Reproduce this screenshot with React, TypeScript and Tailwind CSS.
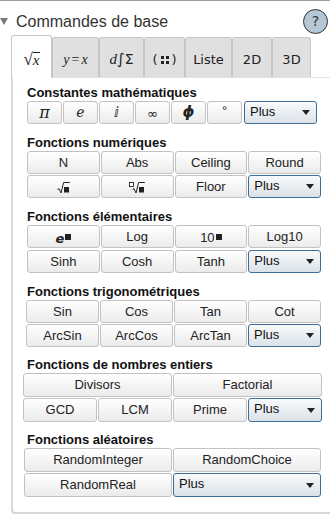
import type { ReactNode } from "react";

const btn =
  "flex h-full items-center justify-center rounded-[3px] border border-[#c2c2c2] bg-linear-to-b from-white to-[#ebebeb] text-[13px] text-[#222]";

function Plus({ className = "" }: { className?: string }) {
  return (
    <div
      className={`flex h-full items-center justify-between rounded-[3px] border border-[#3f6d9a] bg-linear-to-b from-[#f8fafb] to-[#dbe2e8] pl-[5px] pr-[6px] text-[13px] text-[#111] ${className}`}
    >
      <span className="-mt-[2px]">Plus</span>
      <svg width="8" height="5" viewBox="0 0 8 5">
        <path d="M0 0h8L4 5z" fill="#222" />
      </svg>
    </div>
  );
}

function Sq({ size = 6 }: { size?: number }) {
  return <span className="inline-block bg-[#222]" style={{ width: size, height: size }} />;
}

// radical with a placeholder square, optional index box
function Root({ nth }: { nth?: boolean }) {
  return (
    <svg width={nth ? 16 : 13} height="13" viewBox={nth ? "0 0 16 13" : "0 0 13 13"}>
      <g transform={nth ? "translate(3 0)" : undefined}>
        <path d="M0.5 8.5 L2 7.6 L4 12 L6.6 1.5 H12.8" fill="none" stroke="#222" strokeWidth="1" />
        <rect x="7" y="6" width="5" height="5.5" fill="#222" />
      </g>
      {nth && <rect x="0.5" y="1.5" width="4" height="4" fill="white" stroke="#222" strokeWidth="0.9" />}
    </svg>
  );
}

function Tab({ w, active, children }: { w: string; active?: boolean; children: ReactNode }) {
  return (
    <div
      className={`${w} flex items-center justify-center rounded-t-[3px] border border-b-0 border-[#c6c6c6] pt-[4px] text-[13px] text-[#222] ${
        active ? "relative z-10 -mb-px h-[43px] bg-white" : "h-[40px] bg-[#e0e0e0]"
      }`}
    >
      {children}
    </div>
  );
}

function Heading({ children }: { children: ReactNode }) {
  return <div className="text-[13px] font-bold leading-[16px] text-[#111]">{children}</div>;
}

export default function App() {
  return (
    <div className="h-[524px] w-[330px] overflow-hidden border-t border-[#9e9e9e] bg-white font-['Liberation_Sans',Arial,sans-serif] text-[#222]">
      {/* header */}
      <div className="flex h-[34px] items-start">
        <svg className="mt-[17px]" width="8" height="7" viewBox="0 0 8 7">
          <path d="M0 0h8L4 7z" fill="#7a7a7a" />
        </svg>
        <span className="ml-[8px] mt-[12px] text-[16px] leading-[18px] text-[#333]">Commandes de base</span>
        <div className="ml-auto mr-[2px] mt-[8px] flex h-[25px] w-[25px] items-center justify-center rounded-full border border-[#333] bg-[#b5c7d5] font-['DejaVu_Sans',sans-serif] text-[14px] text-[#333]">
          ?
        </div>
      </div>

      {/* tabs */}
      <div className="flex h-[42px] items-end pl-[11px] font-['DejaVu_Sans',sans-serif]">
        <Tab w="w-[41px]" active>
          <span className="font-['Liberation_Serif',serif] text-[17px] leading-[17px]">√</span>
          <span className="mt-[1px] border-t border-[#222] font-['Liberation_Serif',serif] text-[15px] italic leading-[14px]">
            x
          </span>
        </Tab>
        <Tab w="w-[47px]">
          <span className="font-['Liberation_Serif',serif] text-[14px] italic">
            y<span className="mx-[2px] not-italic">=</span>x
          </span>
        </Tab>
        <Tab w="w-[45px]">
          <span className="font-['Liberation_Serif',serif] text-[15px] italic">d</span>
          <span className="text-[15px]">∫</span>
          <span className="text-[14px]">Σ</span>
        </Tab>
        <Tab w="w-[41px]">
          <span className="flex items-center gap-[3px]">
            <span className="text-[13px]">(</span>
            <span className="grid grid-cols-2 gap-[2px]">
              <Sq size={3} />
              <Sq size={3} />
              <Sq size={3} />
              <Sq size={3} />
            </span>
            <span className="text-[13px]">)</span>
          </span>
        </Tab>
        <Tab w="w-[47px]">Liste</Tab>
        <Tab w="w-[40px]">2D</Tab>
        <Tab w="w-[39px]">3D</Tab>
      </div>

      {/* panel */}
      <div className="ml-[11px] rounded-bl-[4px] border-t border-l-2 border-b-2 border-[#d8d8d8] border-t-[#e2e2e2] pb-[15px] pl-[14px] pt-[7px]">
        <div className="mb-[11px]">
          <Heading>Constantes mathématiques</Heading>
          <div className="flex h-[23px] gap-[1px]">
            <div className={`${btn} w-[35px] font-['DejaVu_Serif',serif] text-[16px] italic`}>π</div>
            <div className={`${btn} w-[35px] font-['DejaVu_Sans',sans-serif] text-[14px] italic`}>ℯ</div>
            <div className={`${btn} w-[35px] font-['DejaVu_Sans',sans-serif] text-[14px]`}>ⅈ</div>
            <div className={`${btn} w-[35px] pt-[3px] font-['DejaVu_Sans',sans-serif] text-[12px]`}>∞</div>
            <div className={`${btn} w-[35px] font-['DejaVu_Sans',sans-serif] text-[15px] font-bold italic`}>ϕ</div>
            <div className={`${btn} w-[35px] pb-[4px] text-[11px]`}>°</div>
            <Plus className="ml-[1px] w-[73px]" />
          </div>
        </div>

        <div className="mb-[11px]">
          <Heading>Fonctions numériques</Heading>
          <div className="grid w-[294px] grid-cols-4 grid-rows-[23px_23px] gap-[1px]">
            <div className={btn}>N</div>
            <div className={btn}>Abs</div>
            <div className={btn}>Ceiling</div>
            <div className={btn}>Round</div>
            <div className={`${btn} pt-[2px]`}>
              <Root />
            </div>
            <div className={`${btn} pt-[2px]`}>
              <Root nth />
            </div>
            <div className={btn}>Floor</div>
            <Plus />
          </div>
        </div>

        <div className="mb-[11px]">
          <Heading>Fonctions élémentaires</Heading>
          <div className="grid w-[294px] grid-cols-4 grid-rows-[23px_23px] gap-[2px_1px]">
            <div className={btn}>
              <span className="flex items-start leading-none">
                <span className="mt-[3px] font-['DejaVu_Sans',sans-serif] text-[13px] font-bold italic">e</span>
                <span className="ml-[1px]">
                  <Sq size={6} />
                </span>
              </span>
            </div>
            <div className={btn}>Log</div>
            <div className={btn}>
              <span className="flex items-start leading-none">
                <span className="mt-[2px]">10</span>
                <span className="ml-[1px]">
                  <Sq size={6} />
                </span>
              </span>
            </div>
            <div className={btn}>Log10</div>
            <div className={btn}>Sinh</div>
            <div className={btn}>Cosh</div>
            <div className={btn}>Tanh</div>
            <Plus />
          </div>
        </div>

        <div className="mb-[10px]">
          <Heading>Fonctions trigonométriques</Heading>
          <div className="-ml-[1px] grid w-[295px] grid-cols-4 grid-rows-[23px_23px] gap-[1px]">
            <div className={btn}>Sin</div>
            <div className={btn}>Cos</div>
            <div className={btn}>Tan</div>
            <div className={btn}>Cot</div>
            <div className={btn}>ArcSin</div>
            <div className={btn}>ArcCos</div>
            <div className={btn}>ArcTan</div>
            <Plus />
          </div>
        </div>

        <div className="mb-[10px]">
          <Heading>Fonctions de nombres entiers</Heading>
          <div className="-ml-[4px] grid w-[299px] grid-cols-4 grid-rows-[24px_24px] gap-[1px]">
            <div className={`${btn} col-span-2`}>Divisors</div>
            <div className={`${btn} col-span-2`}>Factorial</div>
            <div className={btn}>GCD</div>
            <div className={btn}>LCM</div>
            <div className={btn}>Prime</div>
            <Plus />
          </div>
        </div>

        <div>
          <Heading>Fonctions aléatoires</Heading>
          <div className="-ml-[3px] grid w-[297px] grid-cols-2 grid-rows-[24px_24px] gap-[1px]">
            <div className={btn}>RandomInteger</div>
            <div className={btn}>RandomChoice</div>
            <div className={btn}>RandomReal</div>
            <Plus />
          </div>
        </div>
      </div>
    </div>
  );
}
